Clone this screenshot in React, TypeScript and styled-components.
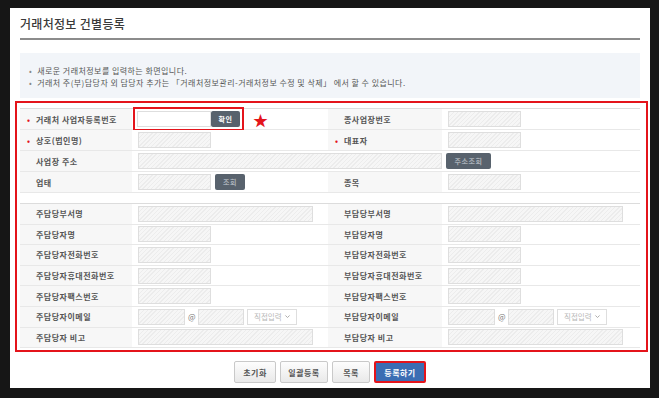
import { Fragment } from "react";
import styled, { createGlobalStyle } from "styled-components";

const Global = createGlobalStyle`
  html, body {
    margin: 0;
    background: #161616;
    font-family: "Noto Sans CJK KR", "Noto Sans", sans-serif;
  }
`;

const Panel = styled.div`
  margin: 8px 0 0 10px;
  width: 640px;
  height: 380px;
  background: #fff;
  box-sizing: border-box;
  overflow: hidden;
`;

const Title = styled.h2`
  margin: 0 10px;
  height: 30px;
  line-height: 32px;
  border-bottom: 2px solid #8c8c8c;
  font-size: 12px;
  font-weight: 500;
  color: #3a3a3a;
  letter-spacing: 0.3px;
`;

const Info = styled.ul`
  margin: 13px 10px 0;
  padding: 12px 0 0 9px;
  height: 45px;
  box-sizing: border-box;
  background: #f2f5f9;
  list-style: none;
  font-size: 8px;
  letter-spacing: 0.45px;
  line-height: 12px;
  color: #555;
  li::before {
    content: "•";
    margin-right: 5px;
    color: #888;
  }
`;

const Frame = styled.div`
  margin: 3px 0 0 5px;
  width: 633px;
  height: 251px;
  box-sizing: border-box;
  border: 2px solid #e4141b;
  padding: 5px 0 0 3px;
`;

const Table = styled.div<{ $gap?: number; $row: number }>`
  width: 620px;
  margin-top: ${(p) => p.$gap ?? 0}px;
  border-top: 1px solid #dcdcdc;
  display: grid;
  grid-template-columns: 112px 196px 114px 198px;
  grid-auto-rows: ${(p) => p.$row}px;
`;

const Label = styled.div<{ $req?: boolean }>`
  border-bottom: 1px solid #e8e8e8;
  background: #f7f7f7;
  display: flex;
  align-items: center;
  padding-left: 16px;
  font-size: 8px;
  font-weight: bold;
  letter-spacing: 0.5px;
  color: #555;
  &::before {
    content: "${(p) => (p.$req ? "•" : "")}";
    color: #e4141b;
    width: ${(p) => (p.$req ? 9 : 0)}px;
    margin-left: ${(p) => (p.$req ? -9 : 0)}px;
  }
`;

const Cell = styled.div<{ $span?: number; $gap?: number }>`
  border-bottom: 1px solid #e8e8e8;
  background: #fff;
  display: flex;
  align-items: center;
  gap: ${(p) => p.$gap ?? 4}px;
  padding-left: 6px;
  grid-column: span ${(p) => p.$span ?? 1};
`;

const Input = styled.div<{ $w: number; $white?: boolean }>`
  width: ${(p) => p.$w}px;
  height: 16px;
  box-sizing: border-box;
  border: 1px solid #dedede;
  background: ${(p) =>
    p.$white
      ? "#fff"
      : "repeating-linear-gradient(135deg, #ececec 0 1px, #f6f6f6 1px 3px)"};
`;

const Confirm = styled.div`
  display: flex;
  outline: 2px solid #e4141b;
  outline-offset: 2px;
  margin-left: -1px;
`;

const DarkBtn = styled.div<{ $w: number; $dim?: boolean }>`
  width: ${(p) => p.$w}px;
  height: 16px;
  background: #58626d;
  border-radius: 2px;
  color: ${(p) => (p.$dim ? "#a9b0b8" : "#fff")};
  font-size: 7px;
  font-weight: bold;
  letter-spacing: 0.5px;
  display: flex;
  align-items: center;
  justify-content: center;
`;

const Star = styled.span`
  color: #e4141b;
  font-size: 15px;
  margin-left: 9px;
  line-height: 1;
`;

const At = styled.span`
  font-size: 8px;
  color: #777;
  width: 7px;
  text-align: center;
`;

const Select = styled.div`
  width: 50px;
  height: 16px;
  box-sizing: border-box;
  border: 1px solid #dedede;
  background: #fff;
  color: #b8b8b8;
  font-size: 7.5px;
  display: flex;
  align-items: center;
  justify-content: space-between;
  padding: 0 5px 0 6px;
  svg {
    width: 7px;
    height: 7px;
  }
`;

const Buttons = styled.div`
  margin-top: 9px;
  display: flex;
  justify-content: center;
  gap: 4px;
`;

const Btn = styled.div<{ $w: number; $primary?: boolean }>`
  width: ${(p) => p.$w}px;
  height: 22px;
  box-sizing: border-box;
  border-radius: 2px;
  border: ${(p) => (p.$primary ? "2px solid #e4141b" : "1px solid #c9c9c9")};
  background: ${(p) =>
    p.$primary ? "#3b6db3" : "linear-gradient(#fdfdfd, #e9e9e9)"};
  color: ${(p) => (p.$primary ? "#fff" : "#555")};
  font-size: 8px;
  font-weight: bold;
  letter-spacing: 0.5px;
  display: flex;
  align-items: center;
  justify-content: center;
`;

const Chevron = () => (
  <svg viewBox="0 0 10 10" fill="none" stroke="#aaa" strokeWidth="1.4">
    <path d="M2 3.5 L5 6.5 L8 3.5" />
  </svg>
);

const Email = () => (
  <Cell $gap={3}>
    <Input $w={47} />
    <At>@</At>
    <Input $w={46} />
    <Select>
      직접입력
      <Chevron />
    </Select>
  </Cell>
);

const contacts: [string, "wide" | "short" | "email"][] = [
  ["부서명", "wide"],
  ["자명", "short"],
  ["자전화번호", "short"],
  ["자휴대전화번호", "short"],
  ["자팩스번호", "short"],
  ["자이메일", "email"],
  ["자 비고", "wide"],
];

function App() {
  return (
    <>
      <Global />
      <Panel>
        <Title>거래처정보 건별등록</Title>
        <Info>
          <li>새로운 거래처정보를 입력하는 화면입니다.</li>
          <li>
            거래처 주(부)담당자 외 담당자 추가는 「거래처정보관리-거래처정보 수정 및 삭제」 에서 할 수 있습니다.
          </li>
        </Info>
        <Frame>
          <Table $row={21}>
            <Label $req>거래처 사업자등록번호</Label>
            <Cell>
              <Confirm>
                <Input $w={74} $white />
                <DarkBtn $w={29}>확인</DarkBtn>
              </Confirm>
              <Star>★</Star>
            </Cell>
            <Label>종사업장번호</Label>
            <Cell>
              <Input $w={73} />
            </Cell>

            <Label $req>상호(법인명)</Label>
            <Cell>
              <Input $w={73} />
            </Cell>
            <Label $req>대표자</Label>
            <Cell>
              <Input $w={73} />
            </Cell>

            <Label>사업장 주소</Label>
            <Cell $span={3}>
              <Input $w={304} />
              <DarkBtn $w={45} $dim>
                주소조회
              </DarkBtn>
            </Cell>

            <Label>업태</Label>
            <Cell>
              <Input $w={73} />
              <DarkBtn $w={30} $dim>
                조회
              </DarkBtn>
            </Cell>
            <Label>종목</Label>
            <Cell>
              <Input $w={73} />
            </Cell>
          </Table>

          <Table $gap={10} $row={20.6}>
            {contacts.map(([name, kind]) =>
              ["주담당", "부담당"].map((who) => (
                <Fragment key={who + name}>
                  <Label>
                    {who}
                    {name}
                  </Label>
                  {kind === "email" ? (
                    <Email />
                  ) : (
                    <Cell>
                      <Input $w={kind === "wide" ? 175 : 73} />
                    </Cell>
                  )}
                </Fragment>
              ))
            )}
          </Table>
        </Frame>
        <Buttons>
          <Btn $w={42}>초기화</Btn>
          <Btn $w={48}>일괄등록</Btn>
          <Btn $w={38}>목록</Btn>
          <Btn $w={52} $primary>
            등록하기
          </Btn>
        </Buttons>
      </Panel>
    </>
  );
}

export default App;
